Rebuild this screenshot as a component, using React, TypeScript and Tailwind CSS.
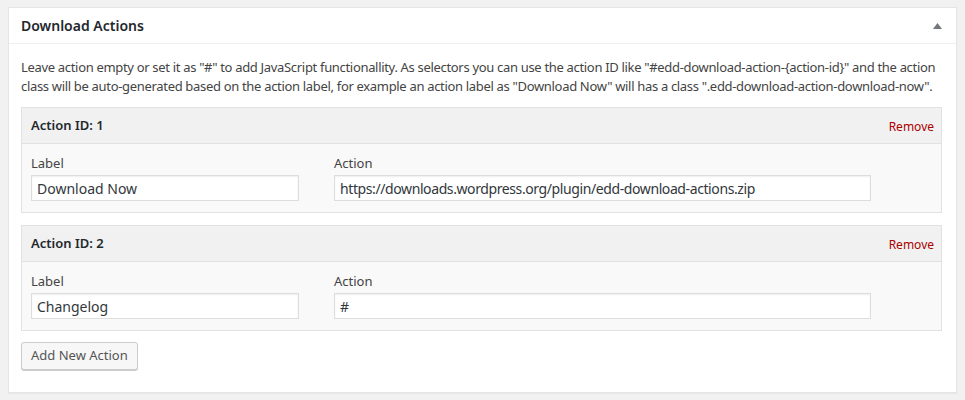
import type { ReactNode } from 'react'

interface ActionRow {
  id: number
  label: string
  action: string
}

const rows: ActionRow[] = [
  { id: 1, label: 'Download Now', action: 'https://downloads.wordpress.org/plugin/edd-download-actions.zip' },
  { id: 2, label: 'Changelog', action: '#' },
]

function Field({ title, width, value, tight }: { title: string; width: string; value: string; tight?: boolean }) {
  return (
    <div className="flex flex-col">
      <span className="text-[13px] leading-[19px] text-[#444]">{title}</span>
      <div
        className={`${width} ${tight ? 'tracking-[-0.4px]' : ''} mt-[2px] h-[26px] flex items-center px-[5px] bg-white border border-[#ddd] shadow-[inset_0_1px_2px_rgba(0,0,0,0.07)] text-[14px] text-[#32373c]`}
      >
        {value}
      </div>
    </div>
  )
}

function ActionBlock({ row, children }: { row: ActionRow; children?: ReactNode }) {
  return (
    <div className="border border-[#e2e2e2] bg-[#f9f9f9]">
      <div className="h-[36px] flex items-center justify-between pl-[9px] pr-[7px] bg-[#f1f1f1] border-b border-[#e2e2e2]">
        <span className="text-[13px] font-semibold text-[#23282d]">Action ID: {row.id}</span>
        <span className="text-[12px] text-[#a00] mt-[3px]">Remove</span>
      </div>
      <div className="flex gap-[35px] pl-[9px] pt-[10px] pb-[11px]">
        <Field title="Label" width="w-[268px]" value={row.label} />
        <Field title="Action" width="w-[537px]" value={row.action} tight />
      </div>
      {children}
    </div>
  )
}

export default function App() {
  return (
    <div
      className="min-h-[400px] w-[965px] bg-[#f1f1f1] pt-[7px] pl-[8px]"
      style={{ fontFamily: '"Noto Sans", "Open Sans", sans-serif' }}
    >
      <div className="w-[949px] bg-white border border-[#e5e5e5] shadow-[0_1px_1px_rgba(0,0,0,0.04)]">
        <div className="h-[36px] flex items-center justify-between pl-[12px] pr-[14px] border-b border-[#eee]">
          <h2 className="text-[14px] font-semibold text-[#23282d]">Download Actions</h2>
          <svg width="9" height="6" viewBox="0 0 9 6" className="mt-[1px]">
            <polygon points="4.5,0 9,6 0,6" fill="#72777c" />
          </svg>
        </div>
        <div className="px-[12px] pt-[14px] pb-[22px]">
          <p className="text-[13px] leading-[19px] text-[#444] whitespace-nowrap tracking-[-0.32px]">
            Leave action empty or set it as "#" to add JavaScript functionallity. As selectors you can use the action ID like "#edd-download-action-{'{action-id}'}" and the action
            <br />
            class will be auto-generated based on the action label, for example an action label as "Download Now" will has a class ".edd-download-action-download-now".
          </p>
          <div className="mt-[11px] w-[921px] flex flex-col gap-[12px]">
            {rows.map((row) => (
              <ActionBlock key={row.id} row={row} />
            ))}
          </div>
          <button className="mt-[11px] h-[28px] px-[9px] bg-[#f7f7f7] border border-[#ccc] rounded-[3px] shadow-[0_1px_0_#ccc] text-[13px] text-[#555]">
            Add New Action
          </button>
        </div>
      </div>
    </div>
  )
}
